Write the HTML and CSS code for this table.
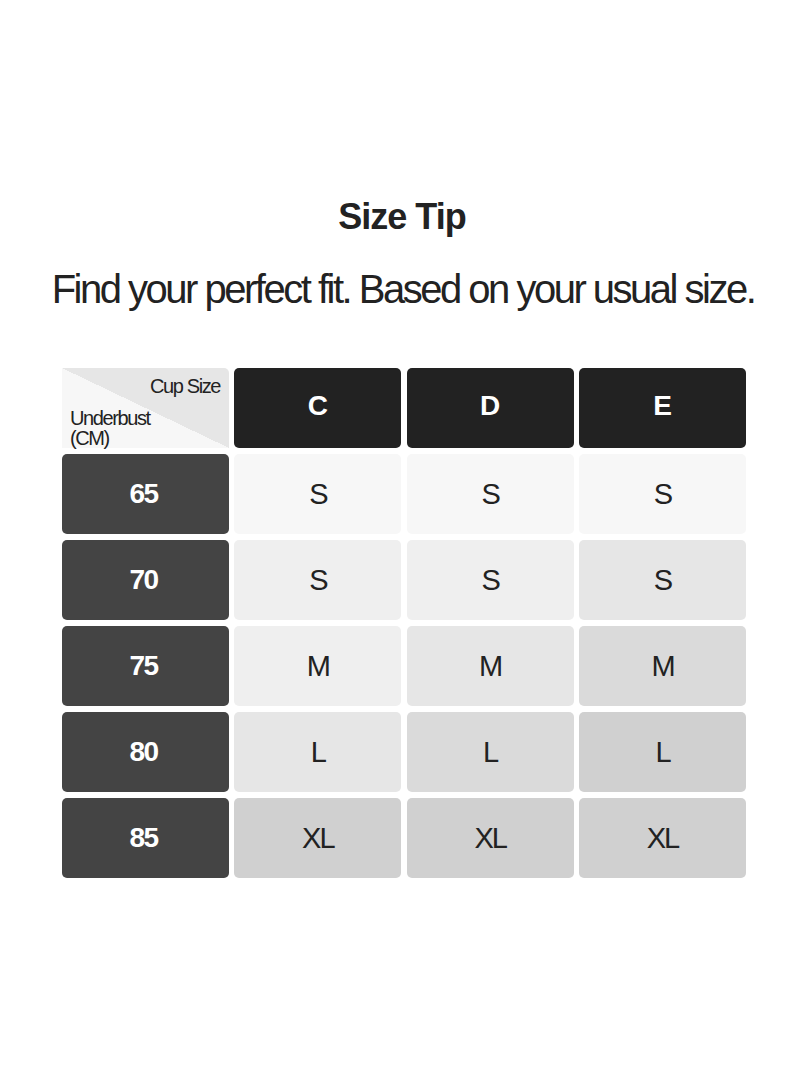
FILE: index.html
```html
<!DOCTYPE html>
<html lang="en">
<head>
<meta charset="utf-8">
<title>Size Tip</title>
<link rel="stylesheet" href="styles.css">
</head>
<body>
<main class="page">
  <h1 class="title">Size Tip</h1>
  <p class="subtitle">Find your perfect fit. Based on your usual size.</p>
  <div class="chart">
    <div class="corner">
      <span class="corner-cup">Cup Size</span>
      <span class="corner-under">Underbust<br>(CM)</span>
    </div>
    <div class="head">C</div>
    <div class="head">D</div>
    <div class="head">E</div>

    <div class="band">65</div>
    <div class="cell t1">S</div>
    <div class="cell t1">S</div>
    <div class="cell t1">S</div>

    <div class="band">70</div>
    <div class="cell t2">S</div>
    <div class="cell t2">S</div>
    <div class="cell t3">S</div>

    <div class="band">75</div>
    <div class="cell t2">M</div>
    <div class="cell t3">M</div>
    <div class="cell t4">M</div>

    <div class="band">80</div>
    <div class="cell t3">L</div>
    <div class="cell t4">L</div>
    <div class="cell t5">L</div>

    <div class="band">85</div>
    <div class="cell t5">XL</div>
    <div class="cell t5">XL</div>
    <div class="cell t5">XL</div>
  </div>
</main>
</body>
</html>
```
FILE: styles.css
```css
html, body {
  margin: 0;
  padding: 0;
  background: #ffffff;
}
body {
  font-family: "Liberation Sans", Arial, sans-serif;
  color: #222222;
}
.page {
  width: 810px;
  height: 1080px;
  box-sizing: border-box;
  padding-top: 194px;
  display: flex;
  flex-direction: column;
  align-items: center;
}
.title {
  margin: 0;
  font-size: 36px;
  line-height: 46px;
  font-weight: 700;
  letter-spacing: -1px;
  color: #222;
  transform: translateX(-3px);
}
.subtitle {
  margin: 24px 0 0 0;
  font-size: 40px;
  line-height: 50px;
  font-weight: 400;
  letter-spacing: -2.5px;
  color: #222;
  white-space: nowrap;
  transform: translateX(-2px);
}
.chart {
  margin: 54px 0 0 -2px;
  width: 684px;
  display: grid;
  grid-template-columns: repeat(4, 1fr);
  grid-auto-rows: 80px;
  column-gap: 5.33px;
  row-gap: 6px;
}
.corner {
  position: relative;
  border-radius: 0 5px 0 0;
  background: linear-gradient(to top right, #f7f7f7 50%, #e6e6e6 50%);
  font-size: 20px;
  letter-spacing: -1.4px;
  color: #222;
}
.corner-cup {
  position: absolute;
  top: 7px;
  right: 9px;
}
.corner-under {
  position: absolute;
  left: 8px;
  top: 40px;
  line-height: 20px;
}
.head, .band, .cell {
  display: flex;
  align-items: center;
  justify-content: center;
  border-radius: 5px;
  font-size: 28px;
}
.head {
  background: #222222;
  color: #ffffff;
  font-weight: 700;
  padding-bottom: 4px;
  box-sizing: border-box;
}
.band {
  background: #444444;
  color: #ffffff;
  font-weight: 700;
  letter-spacing: -1.5px;
  padding-right: 4px;
  box-sizing: border-box;
}
.cell {
  color: #222222;
  font-weight: 400;
  letter-spacing: -2px;
  font-size: 29px;
}
.t1 { background: #f7f7f7; }
.t2 { background: #efefef; }
.t3 { background: #e6e6e6; }
.t4 { background: #dadada; }
.t5 { background: #d0d0d0; }
```
